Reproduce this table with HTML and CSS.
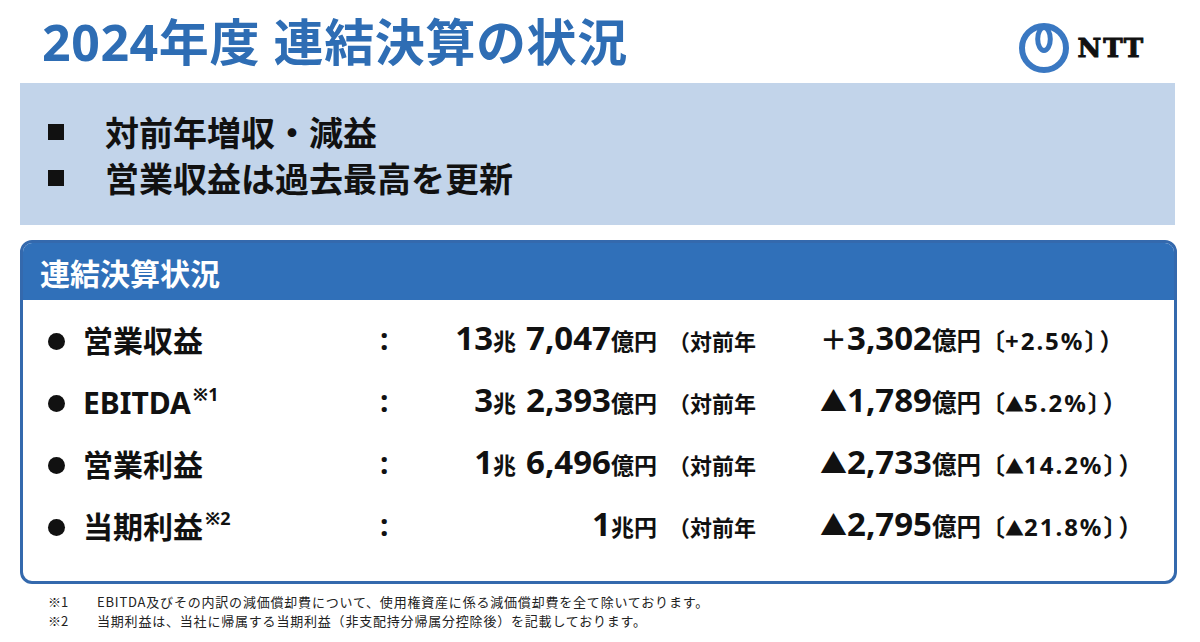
FILE: index.html
```html
<!DOCTYPE html>
<html lang="ja">
<head>
<meta charset="utf-8">
<title>2024年度 連結決算の状況</title>
<link rel="stylesheet" href="styles.css">
</head>
<body>
<header class="top">
  <h1 class="title">2024年度 連結決算の状況</h1>
  <div class="logo">
    <svg class="logo-mark" width="50" height="50" viewBox="0 0 50 50" aria-hidden="true">
      <circle cx="25" cy="25" r="22" fill="none" stroke="#3a78c2" stroke-width="6"/>
      <ellipse cx="25" cy="16" rx="6.3" ry="11.5" fill="none" stroke="#3a78c2" stroke-width="5"/>
    </svg>
    <span class="logo-text">NTT</span>
  </div>
</header>

<section class="summary">
  <div class="sum-line"><span class="sq"></span>対前年増収・減益</div>
  <div class="sum-line"><span class="sq"></span>営業収益は過去最高を更新</div>
</section>

<section class="card">
  <div class="card-head">連結決算状況</div>
  <div class="rows">
    <div class="row">
      <span class="label"><span class="dot"></span>営業収益</span>
      <span class="colon">:</span>
      <span class="value"><span class="num">13</span><span class="unit">兆</span><span class="num gap">7,047</span><span class="unit">億円</span></span>
      <span class="yoy">（対前年</span>
      <span class="chg"><span class="sign">＋</span><span class="num">3,302</span><span class="unit">億円</span><span class="pct">〔<span class="pv">+2.5%</span>〕<span class="close">）</span></span></span>
    </div>
    <div class="row">
      <span class="label"><span class="dot"></span>EBITDA<sup class="ref">※1</sup></span>
      <span class="colon">:</span>
      <span class="value"><span class="num">3</span><span class="unit">兆</span><span class="num gap">2,393</span><span class="unit">億円</span></span>
      <span class="yoy">（対前年</span>
      <span class="chg"><span class="sign">▲</span><span class="num">1,789</span><span class="unit">億円</span><span class="pct">〔<span class="pv"><span class="tri">▲</span>5.2%</span>〕<span class="close">）</span></span></span>
    </div>
    <div class="row">
      <span class="label"><span class="dot"></span>営業利益</span>
      <span class="colon">:</span>
      <span class="value"><span class="num">1</span><span class="unit">兆</span><span class="num gap">6,496</span><span class="unit">億円</span></span>
      <span class="yoy">（対前年</span>
      <span class="chg"><span class="sign">▲</span><span class="num">2,733</span><span class="unit">億円</span><span class="pct">〔<span class="pv"><span class="tri">▲</span>14.2%</span>〕<span class="close">）</span></span></span>
    </div>
    <div class="row">
      <span class="label"><span class="dot"></span>当期利益<sup class="ref">※2</sup></span>
      <span class="colon">:</span>
      <span class="value"><span class="num">1</span><span class="unit">兆円</span></span>
      <span class="yoy">（対前年</span>
      <span class="chg"><span class="sign">▲</span><span class="num">2,795</span><span class="unit">億円</span><span class="pct">〔<span class="pv"><span class="tri">▲</span>21.8%</span>〕<span class="close">）</span></span></span>
    </div>
  </div>
</section>

<footer class="notes">
  <div class="note"><span class="nk">※1</span><span class="nt">EBITDA及びその内訳の減価償却費について、使用権資産に係る減価償却費を全て除いております。</span></div>
  <div class="note"><span class="nk">※2</span><span class="nt">当期利益は、当社に帰属する当期利益（非支配持分帰属分控除後）を記載しております。</span></div>
</footer>
</body>
</html>
```

FILE: styles.css
```css
* { box-sizing: border-box; }

body {
  margin: 0;
  width: 1200px;
  height: 642px;
  overflow: hidden;
  background: #ffffff;
  color: #111111;
  font-family: "Noto Sans", "Noto Sans CJK JP", sans-serif;
}

/* ---------- top bar ---------- */
.top {
  display: flex;
  justify-content: space-between;
  align-items: flex-start;
  height: 83px;
  padding: 0 55px 0 42px;
}

.title {
  margin: 17px 0 0;
  font-size: 50px;
  line-height: 50px;
  font-weight: 700;
  color: #2e6db4;
  letter-spacing: 0.6px;
}

.logo {
  display: flex;
  align-items: center;
  gap: 8px;
  margin-top: 23px;
}

.logo-mark { display: block; }

.logo-text {
  font-family: "DejaVu Serif", "Liberation Serif", serif;
  font-weight: 700;
  font-size: 26px;
  line-height: 1;
  letter-spacing: 2px;
  color: #111;
  -webkit-text-stroke: 1px #111;
}

/* ---------- summary box ---------- */
.summary {
  margin: 0 25px 0 20px;
  height: 142px;
  background: #c2d4ea;
  padding: 26px 0 0 28px;
}

.sum-line {
  display: flex;
  align-items: center;
  height: 46px;
  font-size: 34px;
  font-weight: 700;
  line-height: 46px;
  font-family: "Noto Sans CJK JP", sans-serif;
}

.sq {
  width: 16px;
  height: 16px;
  background: #111;
  margin-right: 41px;
  flex: none;
}

/* ---------- card ---------- */
.card {
  margin: 15px 23px 0 20px;
  height: 344px;
  border: 3px solid #3469ad;
  border-radius: 12px;
  overflow: hidden;
}

.card-head {
  display: flex;
  align-items: center;
  height: 57px;
  padding-left: 17px;
  background: #3070b9;
  color: #ffffff;
  font-family: "Noto Sans CJK JP", sans-serif;
  font-size: 30px;
  font-weight: 700;
}

.rows {
  padding: 7px 0 0 25px;
}

.row {
  display: grid;
  grid-template-columns: 332px 20px 257px 163px auto;
  align-items: baseline;
  align-content: center;
  height: 62px;
  font-weight: 700;
}

.label {
  display: flex;
  align-items: center;
  font-size: 30px;
  line-height: 40px;
}

.dot {
  width: 17px;
  height: 17px;
  border-radius: 50%;
  background: #111;
  margin-right: 18px;
  flex: none;
}

.ref {
  font-size: 18px;
  line-height: 1;
  align-self: flex-start;
  margin-top: 2px;
  margin-left: 2px;
  font-family: "Noto Sans", "Noto Sans CJK JP", sans-serif;
}

.colon {
  font-size: 30px;
}

.value {
  text-align: right;
  white-space: nowrap;
}

.num {
  font-size: 33px;
}

.gap {
  margin-left: 10px;
}

.unit {
  font-size: 23px;
  font-family: "Noto Sans CJK JP", sans-serif;
}

.yoy {
  padding-left: 11px;
  font-size: 22px;
  font-family: "Noto Sans CJK JP", sans-serif;
}

.chg {
  white-space: nowrap;
}

.chg .unit {
  font-size: 24.5px;
}

.sign {
  font-size: 27px;
  font-family: "Noto Sans CJK JP", sans-serif;
}

.pct {
  font-size: 24px;
  font-family: "Noto Sans CJK JP", sans-serif;
}

.pv {
  font-family: "Noto Sans", "Noto Sans CJK JP", sans-serif;
  letter-spacing: 2px;
}

.tri {
  font-size: 19px;
  font-family: "Noto Sans CJK JP", sans-serif;
  letter-spacing: 0;
}

.close {
  margin-left: 3px;
}

/* ---------- footnotes ---------- */
.notes {
  margin: 8px 0 0 48px;
  font-size: 13px;
  line-height: 19px;
  color: #222222;
  font-family: "Noto Sans CJK JP", sans-serif;
}

.note {
  display: flex;
}

.nk {
  width: 49px;
  flex: none;
}

.nt {
  letter-spacing: 0.8px;
}
```
